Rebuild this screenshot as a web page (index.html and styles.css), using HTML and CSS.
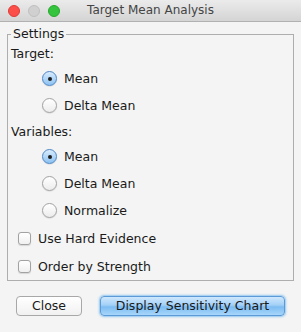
FILE: index.html
```html
<!DOCTYPE html>
<html>
<head>
<meta charset="utf-8">
<link rel="stylesheet" href="styles.css">
</head>
<body>
<div class="window">
  <div class="titlebar">
    <div class="lights">
      <span class="light red"></span>
      <span class="light gray"></span>
      <span class="light green"></span>
    </div>
    <div class="title">Target Mean Analysis</div>
  </div>
  <div class="content">
    <fieldset class="group">
      <legend class="legend">Settings</legend>
      <div class="row label-row">Target:</div>
      <div class="row radio-row"><span class="radio on"></span><span>Mean</span></div>
      <div class="row radio-row"><span class="radio"></span><span>Delta Mean</span></div>
      <div class="row label-row">Variables:</div>
      <div class="row radio-row"><span class="radio on"></span><span>Mean</span></div>
      <div class="row radio-row"><span class="radio"></span><span>Delta Mean</span></div>
      <div class="row radio-row"><span class="radio"></span><span>Normalize</span></div>
      <div class="row check-row"><span class="check"></span><span>Use Hard Evidence</span></div>
      <div class="row check-row"><span class="check"></span><span>Order by Strength</span></div>
    </fieldset>
    <div class="buttons">
      <button class="btn">Close</button>
      <button class="btn default">Display Sensitivity Chart</button>
    </div>
  </div>
</div>
</body>
</html>
```
FILE: styles.css
```css
html, body {
  margin: 0;
  padding: 0;
  background: #f3f4f3;
}
body {
  font-family: "DejaVu Sans", "Liberation Sans", sans-serif;
  font-size: 12px;
  color: #1a1a1a;
}
.window {
  width: 301px;
  height: 332px;
  background: #f3f4f3;
  overflow: hidden;
}
.titlebar {
  height: 21px;
  background: linear-gradient(#ebebeb, #d4d4d4);
  border-bottom: 1px solid #b1b1b1;
  display: flex;
  align-items: center;
  position: relative;
}
.lights {
  display: flex;
  gap: 8px;
  padding-left: 8px;
}
.light {
  width: 12px;
  height: 12px;
  border-radius: 50%;
  box-sizing: border-box;
}
.red { background: #fc4f4a; border: 1px solid #df3b36; }
.gray { background: #d0d0d0; border: 1px solid #c0c0c0; }
.green { background: #35c43d; border: 1px solid #27a92e; }
.title {
  position: absolute;
  left: 0;
  right: 0;
  top: 0;
  height: 21px;
  line-height: 21px;
  text-align: center;
  color: #444;
  pointer-events: none;
}
.content {
  padding: 5px 7px 0 7px;
}
.group {
  margin: 0;
  padding: 0;
  border: 1px solid #aeaeae;
  min-width: 0;
}
.legend {
  margin-left: 3px;
  padding: 0 2px;
  line-height: 14px;
  font-size: 12.5px;
}
.row {
  display: flex;
  align-items: center;
}
.label-row {
  height: 24px;
  padding-left: 3px;
  font-size: 12.5px;
}
.radio-row {
  height: 27px;
  padding-left: 34px;
  gap: 7px;
  font-size: 12.5px;
}
.check-row {
  height: 28px;
  padding-left: 10px;
  gap: 7px;
  font-size: 12.5px;
}
.radio {
  width: 15px;
  height: 15px;
  box-sizing: border-box;
  border-radius: 50%;
  border: 1px solid #a2a2a2;
  background: linear-gradient(#ffffff, #ececec);
  box-shadow: 0 0.5px 1px rgba(0,0,0,0.15);
  position: relative;
}
.radio.on {
  border-color: #4f87c9;
  background: linear-gradient(#d9ecfd, #8cc2f1);
}
.radio.on::after {
  content: "";
  position: absolute;
  left: 4.5px;
  top: 4.5px;
  width: 4px;
  height: 4px;
  border-radius: 50%;
  background: #1d1d1d;
}
.check {
  width: 13px;
  height: 13px;
  box-sizing: border-box;
  border-radius: 3px;
  border: 1px solid #a2a2a2;
  background: linear-gradient(#ffffff, #f0f0f0);
  box-shadow: 0 0.5px 1px rgba(0,0,0,0.12);
}
.buttons {
  display: flex;
  align-items: center;
  gap: 18px;
  padding: 15px 0 0 9px;
}
.btn {
  height: 20px;
  box-sizing: border-box;
  font-family: "DejaVu Sans", "Liberation Sans", sans-serif;
  font-size: 12.5px;
  color: #1a1a1a;
  border-radius: 4px;
  border: 1px solid #a8a8a8;
  background: linear-gradient(#ffffff, #f1f1f1);
  padding: 0;
  width: 66px;
  line-height: 18px;
}
.btn.default {
  width: 185px;
  border-color: #5b9ad6;
  background: linear-gradient(#cfe8fd 0%, #a3d0f7 45%, #7dbcf2 55%, #a7d6fa 100%);
  box-shadow: 0 0 2px 1px rgba(106,178,240,0.7);
}
```
